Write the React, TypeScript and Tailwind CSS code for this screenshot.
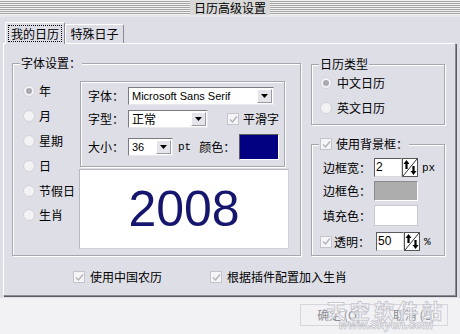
import React from "react";

const Radio = ({ checked }: { checked?: boolean }) => (
    <span className="w-[12px] h-[12px] rounded-full bg-[#f3f3f6] border border-[#d2d2d8] flex items-center justify-center shrink-0">
        {checked && <span className="w-[6px] h-[6px] rounded-full bg-[#a9a9b0]" />}
    </span>
);

const Check = () => (
    <span className="w-[12px] h-[12px] bg-[#f5f5f7] border border-[#c4c4cc] flex items-center justify-center shrink-0">
        <svg width="9" height="9" viewBox="0 0 9 9">
            <path d="M1 4.5 L3.5 7 L8 1.5" stroke="#b2b2b8" strokeWidth="1.4" fill="none" />
        </svg>
    </span>
);

const Group = ({
    legend,
    className,
    children,
}: {
    legend: React.ReactNode;
    className: string;
    children: React.ReactNode;
}) => (
    <div
        className={
            "relative border border-[#a6a6ae] shadow-[inset_1px_1px_0_#fff,1px_1px_0_#fff] " + className
        }
    >
        <div className="absolute -top-[8px] left-[7px] bg-[#dedee6] px-[1px] flex items-center gap-[4px] leading-[14px]">
            {legend}
        </div>
        {children}
    </div>
);

const Combo = ({ value, w, mono }: { value: string; w: string; mono?: boolean }) => (
    <div
        className={
            "h-[18px] bg-white border border-t-[#7a7a80] border-l-[#7a7a80] border-r-[#e8e8ee] border-b-[#e8e8ee] flex items-center justify-between " +
            w
        }
    >
        <span className={"pl-[3px] leading-[14px] " + (mono ? "font-['Liberation_Sans',sans-serif] text-[11px]" : "")}>
            {value}
        </span>
        <span className="w-[15px] h-[14px] mr-[1px] bg-[#e4e4ea] border border-t-white border-l-white border-r-[#9a9aa2] border-b-[#9a9aa2] flex items-center justify-center">
            <svg width="7" height="4" viewBox="0 0 7 4">
                <path d="M0 0 H7 L3.5 4 Z" fill="#000" />
            </svg>
        </span>
    </div>
);

const Spinner = () => (
    <svg width="16" height="19" viewBox="0 0 16 19" className="shrink-0">
        <rect x="0.5" y="0.5" width="15" height="18" fill="#fff" stroke="#555" />
        <line x1="1" y1="18" x2="15" y2="1" stroke="#333" strokeWidth="1" />
        <path d="M4.5 2 L7.5 6 H5.6 V11 H3.4 V6 H1.5 Z" fill="#000" />
        <path d="M11.5 17 L8.5 13 H10.4 V8 H12.6 V13 H14.5 Z" fill="#000" />
    </svg>
);

const Field = ({ value }: { value: string }) => (
    <div className="w-[28px] h-[19px] bg-white border border-t-[#5a5a60] border-l-[#5a5a60] border-r-[#d8d8de] border-b-[#d8d8de] pl-[1px] leading-[16px] font-['Liberation_Sans',sans-serif] text-[12px]">
        {value}
    </div>
);

export default function App() {
    return (
        <div className="w-[460px] h-[334px] overflow-hidden bg-[#f2f2f5] text-[12px] text-black font-['Noto_Sans_CJK_SC','Noto_Sans',sans-serif]">
            {/* title bar */}
            <div className="h-[17px] bg-[#dedee6] flex flex-col">
                <div className="h-[15px] flex items-center justify-center bg-[repeating-linear-gradient(to_bottom,#f2f2f2_0px,#f2f2f2_1px,#a4a4a4_1px,#a4a4a4_2px)]">
                    <span className="bg-[#d8d8d8] px-[4px] leading-[15px] text-[12px]">日历高级设置</span>
                </div>
                <div className="h-[2px] bg-[#e6e6ec]" />
            </div>

            <div className="bg-[#dedee6] h-[281px] pl-[3px] pt-[5px]">
                {/* tabs */}
                <div className="flex items-end h-[21px] pl-[2px]">
                    <div className="h-[22px] w-[60px] bg-[#dedee6] border border-b-0 border-t-white border-l-white border-r-[#8a8a92] rounded-t-[2px] px-[2px] pt-[2px] relative z-10 -mb-[1px]">
                        <div className="border border-dotted border-black h-[17px] flex items-center justify-center leading-[14px]">
                            我的日历
                        </div>
                    </div>
                    <div className="h-[19px] w-[59px] bg-[#dedee6] border border-b-0 border-t-white border-l-white border-r-[#8a8a92] rounded-t-[2px] flex items-center justify-center leading-[14px]">
                        特殊日子
                    </div>
                </div>

                {/* panel */}
                <div className="w-[453px] h-[253px] border border-t-white border-l-white border-r-[#8c8c94] border-b-[#8c8c94] shadow-[1px_1px_0_#5c5c62] pl-[8px] pt-[19px]">
                    <div className="flex">
                        <Group legend={<span>字体设置：</span>} className="w-[289px] h-[193px] flex">
                            <div className="w-[66px] pl-[10px] pt-[15px] flex flex-col">
                                {[
                                    ["年", true],
                                    ["月", false],
                                    ["星期", false],
                                    ["日", false],
                                    ["节假日", false],
                                    ["生肖", false],
                                ].map(([t, c]) => (
                                    <div key={t as string} className="h-[24.8px] flex items-center gap-[4px] leading-[14px]">
                                        <Radio checked={c as boolean} />
                                        <span>{t}</span>
                                    </div>
                                ))}
                            </div>
                            <div className="pt-[17px] flex flex-col">
                                <div className="w-[205px] h-[86px] border border-[#a6a6ae] shadow-[inset_1px_1px_0_#fff,1px_1px_0_#fff] ml-[1px] pl-[7px] pt-[5px] flex flex-col">
                                    <div className="flex items-center h-[18px]">
                                        <span className="w-[40px] leading-[14px]">字体：</span>
                                        <Combo value="Microsoft Sans Serif" w="w-[146px]" mono />
                                    </div>
                                    <div className="flex items-center h-[18px] mt-[5px]">
                                        <span className="w-[40px] leading-[14px]">字型：</span>
                                        <Combo value="正常" w="w-[80px]" />
                                        <span className="ml-[19px]">
                                            <Check />
                                        </span>
                                        <span className="ml-[4px] leading-[14px]">平滑字</span>
                                    </div>
                                    <div className="flex items-center h-[26px] mt-[6px]">
                                        <span className="w-[40px] leading-[14px]">大小：</span>
                                        <Combo value="36" w="w-[45px]" mono />
                                        <span className="ml-[5px] font-['Liberation_Mono',monospace] text-[11px] leading-[14px]">pt</span>
                                        <span className="ml-[8px] leading-[14px]">颜色：</span>
                                        <span className="ml-[4px] w-[40px] h-[26px] bg-[#000080] border border-t-[#5a5a60] border-l-[#5a5a60] border-r-white border-b-white" />
                                    </div>
                                </div>
                                <div className="mt-[2px] w-[210px] h-[80px] bg-white border border-t-[#b8b8c0] border-l-[#b8b8c0] border-r-[#d0d0d8] border-b-[#d0d0d8] flex items-center justify-center">
                                    <span className="font-['Liberation_Sans',sans-serif] text-[50px] leading-none text-[#16166e]">2008</span>
                                </div>
                            </div>
                        </Group>

                        <div className="ml-[10px] flex flex-col">
                            <Group legend={<span>日历类型</span>} className="w-[134px] h-[61px] mt-[1px] pl-[8px] pt-[5px]">
                                <div className="h-[25px] flex items-center gap-[5px] leading-[14px]">
                                    <Radio checked />
                                    <span>中文日历</span>
                                </div>
                                <div className="h-[25px] flex items-center gap-[5px] leading-[14px]">
                                    <Radio />
                                    <span>英文日历</span>
                                </div>
                            </Group>
                            <Group
                                legend={
                                    <>
                                        <Check />
                                        <span>使用背景框：</span>
                                    </>
                                }
                                className="w-[134px] h-[112px] mt-[19px] pl-[11px] pt-[13px] flex flex-col"
                            >
                                <div className="flex items-center h-[19px]">
                                    <span className="w-[51px] leading-[14px]">边框宽：</span>
                                    <Field value="2" />
                                    <Spinner />
                                    <span className="ml-[4px] font-['Liberation_Mono',monospace] text-[11px] leading-[14px]">px</span>
                                </div>
                                <div className="flex items-center h-[20px] mt-[4px]">
                                    <span className="w-[51px] leading-[14px]">边框色：</span>
                                    <span className="w-[44px] h-[20px] bg-[#adadad] border border-t-[#8a8a90] border-l-[#8a8a90] border-r-white border-b-white" />
                                </div>
                                <div className="flex items-center h-[21px] mt-[4px]">
                                    <span className="w-[51px] leading-[14px]">填充色：</span>
                                    <span className="w-[44px] h-[21px] bg-white border border-[#c8c8d0]" />
                                </div>
                                <div className="flex items-center h-[19px] mt-[6px] -ml-[3px]">
                                    <Check />
                                    <span className="w-[42px] ml-[2px] leading-[14px]">透明：</span>
                                    <Field value="50" />
                                    <Spinner />
                                    <span className="ml-[4px] font-['Liberation_Mono',monospace] text-[11px] leading-[14px]">%</span>
                                </div>
                            </Group>
                        </div>
                    </div>

                    {/* bottom options */}
                    <div className="flex items-center h-[14px] mt-[14px] pl-[61px]">
                        <Check />
                        <span className="ml-[5px] leading-[14px]">使用中国农历</span>
                        <span className="ml-[48px]">
                            <Check />
                        </span>
                        <span className="ml-[5px] leading-[14px]">根据插件配置加入生肖</span>
                    </div>
                </div>
            </div>

            {/* dialog buttons */}
            <div className="relative flex justify-end gap-[2px] pr-[12px] pt-[6px]">
                <div className="w-[78px] h-[22px] border border-[#d6d6dc] flex items-center justify-center text-[#8c8c92] leading-[14px]">
                    确定 (O)
                </div>
                <div className="w-[68px] h-[22px] border border-[#d6d6dc] flex items-center justify-center text-[#8c8c92] leading-[14px]">
                    取消 (C)
                </div>
                <div className="absolute right-[14px] top-[2px] flex flex-col items-center pointer-events-none">
                    <span className="text-[20px] leading-[22px] font-bold text-white/70 [-webkit-text-stroke:1px_#c8c8d0] tracking-[4px]">
                        天空软件站
                    </span>
                    <span className="-mt-[3px] text-[12px] leading-[12px] italic font-bold font-['Liberation_Sans',sans-serif] text-white/70 [-webkit-text-stroke:0.6px_#b8b8c0]">
                        www.Skycn.com
                    </span>
                </div>
            </div>
        </div>
    );
}
